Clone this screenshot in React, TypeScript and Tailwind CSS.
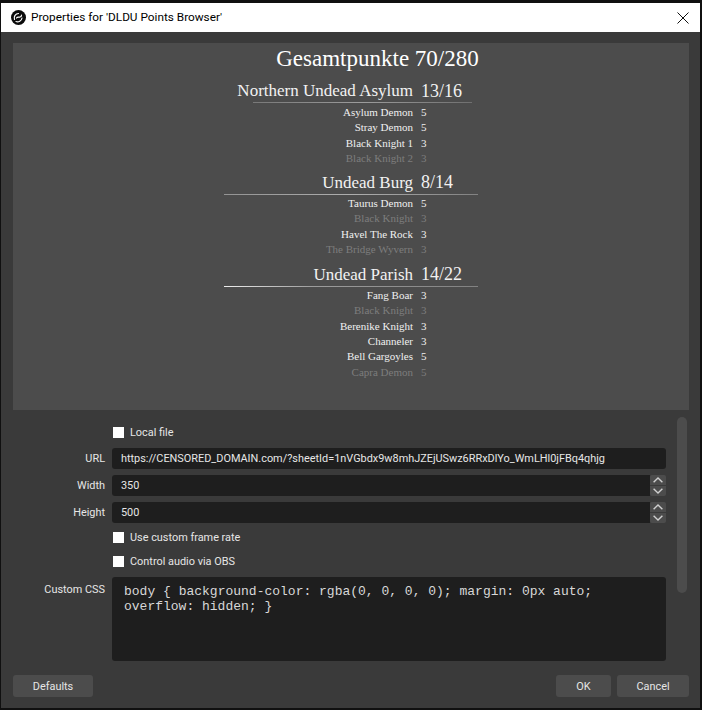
const areas: {
  title: string;
  score: string;
  lineClass: string;
  rowsClass: string;
  bosses: { name: string; pts: number; done: boolean }[];
}[] = [
  {
    title: "Northern Undead Asylum",
    score: "13/16",
    lineClass: "ml-[240px] w-[219px] from-white/25 via-white/45 to-white/20",
    rowsClass: "pt-[1.5px] mb-[6.17px]",
    bosses: [
      { name: "Asylum Demon", pts: 5, done: true },
      { name: "Stray Demon", pts: 5, done: true },
      { name: "Black Knight 1", pts: 3, done: true },
      { name: "Black Knight 2", pts: 3, done: false },
    ],
  },
  {
    title: "Undead Burg",
    score: "8/14",
    lineClass: "ml-[211px] w-[254px] from-white/40 via-white/55 to-white/30",
    rowsClass: "pt-[0.5px] mb-[7.17px]",
    bosses: [
      { name: "Taurus Demon", pts: 5, done: true },
      { name: "Black Knight", pts: 3, done: false },
      { name: "Havel The Rock", pts: 3, done: true },
      { name: "The Bridge Wyvern", pts: 3, done: false },
    ],
  },
  {
    title: "Undead Parish",
    score: "14/22",
    lineClass: "ml-[211px] w-[254px] from-white/90 via-white/45 via-[35%] to-white/30",
    rowsClass: "pt-[0.5px]",
    bosses: [
      { name: "Fang Boar", pts: 3, done: true },
      { name: "Black Knight", pts: 3, done: false },
      { name: "Berenike Knight", pts: 3, done: true },
      { name: "Channeler", pts: 3, done: true },
      { name: "Bell Gargoyles", pts: 5, done: true },
      { name: "Capra Demon", pts: 5, done: false },
    ],
  },
];

function Area({ title, score, lineClass, rowsClass, bosses }: (typeof areas)[number]) {
  return (
    <div>
      <div className="flex h-[22px] items-center text-[#f2f2f2]">
        <div className="w-[400px] text-right text-[17px] whitespace-nowrap">{title}</div>
        <div className="ml-2 text-[18px]">{score}</div>
      </div>
      <div className={`h-px bg-gradient-to-r ${lineClass}`} />
      <div className={rowsClass}>
        {bosses.map((b) => (
          <div
            key={b.name + b.pts}
            className={`flex h-[15.33px] items-center text-[11px] ${b.done ? "text-[#f0f0f0]" : "text-[#7d7d7d]"}`}
          >
            <div className="w-[400px] text-right">{b.name}</div>
            <div className="ml-2">{b.pts}</div>
          </div>
        ))}
      </div>
    </div>
  );
}

function Checkbox({ label, className }: { label: string; className: string }) {
  return (
    <div className={`ml-[100px] flex h-[11px] items-center gap-[6px] ${className}`}>
      <div className="h-[11px] w-[11px] bg-white" />
      <span className="pt-[2px]">{label}</span>
    </div>
  );
}

function Chevron({ up }: { up?: boolean }) {
  return (
    <svg width="10" height="6" viewBox="0 0 10 6" fill="none" stroke="#cfcfcf" strokeWidth="1.4">
      <path d={up ? "M.6 5.3 5 1l4.4 4.3" : "M.6.7 5 5l4.4-4.3"} />
    </svg>
  );
}

function ObsLogo() {
  return (
    <svg width="15" height="15" viewBox="0 0 30 30" fill="none" stroke="#fff" strokeWidth="2.4" strokeLinecap="round">
      <circle cx="15" cy="15" r="15" fill="#0b0b0b" stroke="none" />
      <path d="M7 19c-2-6 2-12 8-12" />
      <path d="M10 23c5 2 11-1 12-7" />
      <path d="M11 16c2-3 5-1 7-2 2 0 3-2 3-4" />
    </svg>
  );
}

function NumberRow({ label, value, className }: { label: string; value: string; className: string }) {
  return (
    <div className={`flex h-[21px] ${className}`}>
      <div className="flex w-[92px] items-center justify-end pt-[2px]">{label}</div>
      <div className="ml-[7px] flex w-[554px]">
        <div className="flex flex-1 items-center rounded-l-[3px] bg-[#1e1e1e] pt-[2px] pl-[9px]">{value}</div>
        <div className="flex w-[16px] flex-col gap-px">
          <div className="flex h-[10px] items-center justify-center rounded-t-[2px] bg-[#4c4c4c]">
            <Chevron up />
          </div>
          <div className="flex h-[10px] items-center justify-center rounded-b-[2px] bg-[#4c4c4c]">
            <Chevron />
          </div>
        </div>
      </div>
    </div>
  );
}

export default function App() {
  return (
    <div className="flex h-[710px] w-[702px] flex-col bg-[#101010] pt-[3px] pr-[2px] pb-[2px] pl-[1px] font-['Roboto',sans-serif] text-[10.9px] text-[#e6e6e6]">
      {/* Title bar */}
      <div className="flex h-[29px] shrink-0 items-center bg-white pr-[11px] pl-[10px] text-[11.8px] text-black">
        <ObsLogo />
        <span className="ml-[5px] flex-1">Properties for 'DLDU Points Browser'</span>
        <svg width="12" height="12" viewBox="0 0 12 12" stroke="#111" strokeWidth="1" fill="none">
          <path d="M.5.5l11 11M11.5.5l-11 11" />
        </svg>
      </div>

      <div className="flex min-h-0 flex-1 flex-col bg-[#3a3a3a] pt-[11px]">
        {/* Browser preview */}
        <div className="mr-[11px] ml-[12px] h-[367px] shrink-0 bg-[#4c4c4c] font-['Liberation_Serif',serif]">
          <div className="pt-[2px] pl-[53px] text-center text-[23px] leading-[28px] text-white">
            Gesamtpunkte 70/280
          </div>
          <div className="mt-[7px]">
            {areas.map((a) => (
              <Area key={a.title} {...a} />
            ))}
          </div>
        </div>

        {/* Properties form */}
        <div className="flex min-h-0 flex-1 pt-[7px] pl-[12px]">
          <div className="w-[653px] pt-[10px]">
            <Checkbox label="Local file" className="" />
            <div className="mt-[10px] flex h-[21px]">
              <div className="flex w-[92px] items-center justify-end pt-[2px]">URL</div>
              <div className="ml-[7px] flex w-[554px] items-center rounded-[3px] bg-[#1e1e1e] pt-[2px] pl-[9px] whitespace-nowrap">
                https://CENSORED_DOMAIN.com/?sheetId=1nVGbdx9w8mhJZEjUSwz6RRxDlYo_WmLHl0jFBq4qhjg
              </div>
            </div>
            <NumberRow label="Width" value="350" className="mt-[6px]" />
            <NumberRow label="Height" value="500" className="mt-[6px]" />
            <Checkbox label="Use custom frame rate" className="mt-[9px]" />
            <Checkbox label="Control audio via OBS" className="mt-[13px]" />
            <div className="mt-[10px] flex">
              <div className="w-[92px] pt-[5px] text-right">Custom CSS</div>
              <div className="ml-[7px] h-[84px] w-[554px] rounded-[3px] bg-[#1e1e1e] px-[12px] pt-[7px] font-['Liberation_Mono',monospace] text-[13px] leading-[15px] text-[#d8d8d8]">
                body {"{"} background-color: rgba(0, 0, 0, 0); margin: 0px auto;
                <br />
                overflow: hidden; {"}"}
              </div>
            </div>
          </div>
          <div className="ml-[11px] h-[176px] w-[10px] rounded-[5px] bg-[#4c4c4c]" />
        </div>

        {/* Dialog buttons */}
        <div className="mr-[11px] mb-[11px] ml-[12px] flex h-[22px] shrink-0 gap-[6px]">
          <div className="flex w-[80px] items-center justify-center rounded-[3px] bg-[#4c4c4c] pt-[2px]">Defaults</div>
          <div className="ml-auto flex w-[55px] items-center justify-center rounded-[3px] bg-[#4c4c4c] pt-[2px]">OK</div>
          <div className="flex w-[72px] items-center justify-center rounded-[3px] bg-[#4c4c4c] pt-[2px]">Cancel</div>
        </div>
      </div>
    </div>
  );
}
